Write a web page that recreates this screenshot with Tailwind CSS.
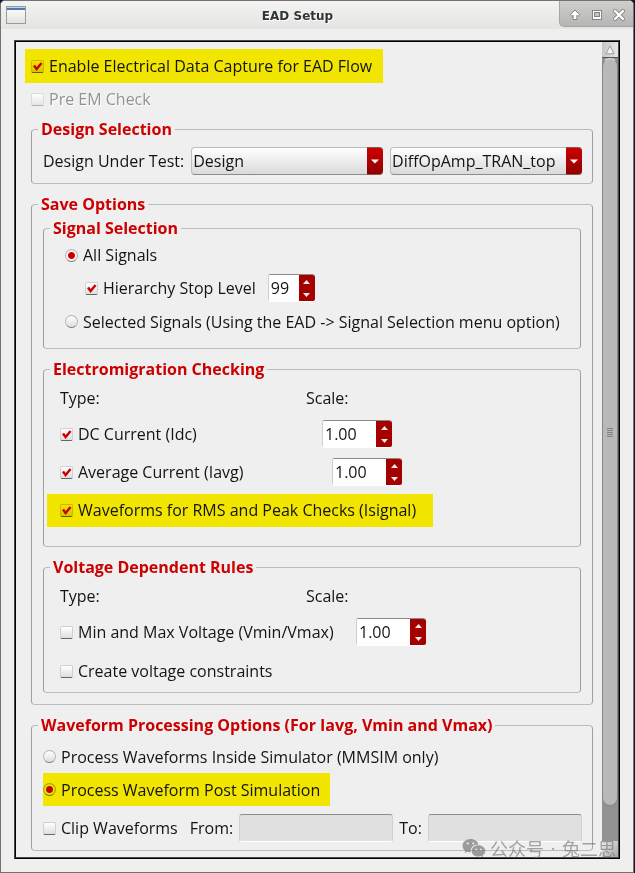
<!DOCTYPE html>
<html lang="en">
<head>
    <meta charset="UTF-8">
    <meta name="viewport" content="width=device-width, initial-scale=1.0">
    <title>EAD Setup</title>
    <script src="https://cdn.jsdelivr.net/npm/@tailwindcss/browser@4"></script>
</head>
<body class="min-h-screen bg-[#0d1a2e] pr-px flex font-['Open_Sans',sans-serif] text-base leading-[22px] text-[#141414]">
    <div class="relative flex-1 min-w-0 flex flex-col bg-[#efefef] border border-[#767271] rounded-t-[5px] overflow-hidden">

        <!-- Title bar -->
        <header class="flex items-start h-7 bg-linear-to-b from-[#f3f3f2] to-[#e4e4e2]">
            <svg class="ml-[5px] mt-[5px] shrink-0" width="20" height="18" viewBox="0 0 20 18" aria-hidden="true">
                <defs>
                    <linearGradient id="win" x1="0" y1="0" x2="0" y2="1">
                        <stop offset="0" stop-color="#ffffff"/>
                        <stop offset="1" stop-color="#e2e2df"/>
                    </linearGradient>
                </defs>
                <rect x="0.5" y="0.5" width="19" height="17" fill="url(#win)" stroke="#9b9b97"/>
                <rect x="1" y="1" width="18" height="1" fill="#c9d3e2"/>
                <rect x="1" y="2" width="18" height="2" fill="#4a78b8"/>
            </svg>
            <h1 class="flex-1 pl-2.5 text-center font-['DejaVu_Sans',sans-serif] font-bold text-[12px] leading-[30px] text-[#2e3436] [text-shadow:1px_1px_0_#fff]">EAD Setup</h1>
            <div class="flex items-center justify-center gap-2 w-[74px] h-[26px] pt-0.5 border-l border-b border-[#a5a5a3] rounded-bl-[5px] bg-linear-to-b from-[#cfcfcd] to-[#b5b5b3]">
                <button type="button" aria-label="Shade" class="size-[14px]">
                    <svg width="14" height="14" viewBox="0 0 14 14"><path d="M7 2 L11.700 6.700 L10.200 8.300 L8.900 7.300 V11.500 H5.100 V7.300 L3.800 8.300 L2.300 6.700 Z" fill="#fff" stroke="#858585"/></svg>
                </button>
                <button type="button" aria-label="Maximize" class="size-[14px]">
                    <svg width="14" height="14" viewBox="0 0 14 14"><rect x="2.5" y="2.5" width="9" height="9" fill="#fff" stroke="#858585"/><rect x="4.500" y="4.500" width="5" height="4" fill="#c4c4c2" stroke="#858585"/></svg>
                </button>
                <button type="button" aria-label="Close" class="size-[14px]">
                    <svg width="14" height="14" viewBox="0 0 14 14"><path d="M3 3 L11 11 M11 3 L3 11" stroke="#858585" stroke-width="4" stroke-linecap="round"/><path d="M3 3 L11 11 M11 3 L3 11" stroke="#fff" stroke-width="2.400" stroke-linecap="round"/></svg>
                </button>
            </div>
        </header>

        <!-- Scroll frame -->
        <main class="flex-1 flex mt-[11px] mx-[13px] mb-[13px] border border-[#4a4a4a] border-r-black border-b-black">
            <form class="flex-1 min-w-0 border border-black border-b-[#4a4a4a] border-r-0 pt-[7px] pl-[15px] pr-[9px] pb-1.5">

                <label class="flex items-center gap-[5px] w-fit h-[34px] -ml-1.5 pl-1.5 pr-[11px] bg-[#f2e500]">
                    <span class="relative size-[13px] shrink-0">
                        <input type="checkbox" checked class="peer appearance-none block size-[13px] rounded-[2px] border border-[#d0d0d0] border-b-[#666] bg-linear-to-b from-white to-[#dedede] mix-blend-multiply">
                        <svg class="hidden peer-checked:block absolute inset-0 pointer-events-none" viewBox="0 0 13 13"><path d="M3 5.500 L5.600 9 L10.600 3" fill="none" stroke="#cc0000" stroke-width="2.400"/></svg>
                    </span>
                    Enable Electrical Data Capture for EAD Flow
                </label>
                <label class="flex items-center gap-[5px] w-fit h-8 text-[#929292] [text-shadow:1px_1px_0_#fff]">
                    <input type="checkbox" disabled class="appearance-none block size-[13px] rounded-[2px] border border-[#dadada] border-b-[#b0b0b0] bg-linear-to-b from-white to-[#e6e6e6]">
                    Pre EM Check
                </label>

                <fieldset class="min-w-0 mt-[3px] border border-[#bcbcbc] border-l-[#a0a0a0] border-r-[#a0a0a0] rounded-[4px]">
                    <legend class="ml-1.5 px-[3px] font-bold text-[#cc0000]">Design Selection</legend>
                    <div class="flex items-center gap-[7px] pt-[7px] pl-[11px] pr-2.5 pb-2">
                        <label for="dut-kind" class="shrink-0">Design Under Test:</label>
                        <div class="relative flex-1 min-w-0">
                            <select id="dut-kind" class="appearance-none block w-full h-7 pl-px pr-4 rounded-[4px] border border-[#bdbdbd] border-b-[#8c8c8c] bg-linear-to-b from-white to-[#dadada]">
                                <option>Design</option>
                            </select>
                            <span class="absolute right-0 top-0 bottom-0 w-4 flex items-center justify-center rounded-r-[4px] border-y border-[#8f5555] bg-linear-to-b from-[#cc0000] to-[#900000] pointer-events-none">
                                <svg width="8" height="5" viewBox="0 0 8 5"><path d="M0 0.500 H8 L4 4.500 Z" fill="#fff"/></svg>
                            </span>
                        </div>
                        <div class="relative flex-1 min-w-0">
                            <select aria-label="Design name" class="appearance-none block w-full h-7 pl-px pr-4 rounded-[4px] border border-[#bdbdbd] border-b-[#8c8c8c] bg-linear-to-b from-white to-[#dadada]">
                                <option>DiffOpAmp_TRAN_top</option>
                            </select>
                            <span class="absolute right-0 top-0 bottom-0 w-4 flex items-center justify-center rounded-r-[4px] border-y border-[#8f5555] bg-linear-to-b from-[#cc0000] to-[#900000] pointer-events-none">
                                <svg width="8" height="5" viewBox="0 0 8 5"><path d="M0 0.500 H8 L4 4.500 Z" fill="#fff"/></svg>
                            </span>
                        </div>
                    </div>
                </fieldset>

                <fieldset class="min-w-0 mt-[9px] border border-[#bcbcbc] border-l-[#a0a0a0] border-r-[#a0a0a0] rounded-[4px]">
                    <legend class="ml-1.5 px-[3px] font-bold text-[#cc0000]">Save Options</legend>
                    <div class="pt-0.5 px-[11px] pb-[11px]">

                        <fieldset class="min-w-0 border border-[#bcbcbc] border-l-[#a0a0a0] border-r-[#a0a0a0] rounded-[4px]">
                            <legend class="ml-1.5 px-[3px] font-bold text-[#cc0000]">Signal Selection</legend>
                            <div class="pl-[21px] pb-2.5">
                                <label class="flex items-center gap-[5px] w-fit h-8">
                                    <input type="radio" name="signals" checked class="appearance-none block size-[13px] rounded-full border border-[#b5b5b5] border-b-[#777] bg-[radial-gradient(circle,#cc0000_3px,#ffffff_4px,#e4e4e4_6px)]">
                                    All Signals
                                </label>
                                <div class="flex items-center gap-3 h-[34px] ml-5">
                                    <label for="stop-level-on" class="flex items-center gap-[5px]">
                                        <span class="relative size-[13px] shrink-0">
                                            <input id="stop-level-on" type="checkbox" checked class="peer appearance-none block size-[13px] rounded-[2px] border border-[#d0d0d0] border-b-[#666] bg-linear-to-b from-white to-[#dedede]">
                                            <svg class="hidden peer-checked:block absolute inset-0 pointer-events-none" viewBox="0 0 13 13"><path d="M3 5.500 L5.600 9 L10.600 3" fill="none" stroke="#cc0000" stroke-width="2.400"/></svg>
                                        </span>
                                        Hierarchy Stop Level
                                    </label>
                                    <div class="flex h-7 rounded-[3px] overflow-hidden border-t border-t-[#8a8a8a] border-b border-b-white">
                                        <input type="text" inputmode="numeric" value="99" aria-label="Hierarchy stop level value" class="w-[31px] pl-0.5 bg-white border-l border-[#cfcfcf] outline-none">
                                        <div class="flex flex-col w-4 bg-[#a40000]">
                                            <button type="button" aria-label="Increase" class="flex-1 flex items-center justify-center"><svg width="7" height="4" viewBox="0 0 7 4"><path d="M0 4 H7 L3.500 0 Z" fill="#f5e5e5"/></svg></button>
                                            <button type="button" aria-label="Decrease" class="flex-1 flex items-center justify-center"><svg width="7" height="4" viewBox="0 0 7 4"><path d="M0 0 H7 L3.500 4 Z" fill="#f5e5e5"/></svg></button>
                                        </div>
                                    </div>
                                </div>
                                <label class="flex items-center gap-[5px] w-fit h-[33px]">
                                    <input type="radio" name="signals" class="appearance-none block size-[13px] rounded-full border border-[#b5b5b5] border-b-[#777] bg-linear-to-b from-white to-[#dedede]">
                                    Selected Signals (Using the EAD -&gt; Signal Selection menu option)
                                </label>
                            </div>
                        </fieldset>

                        <fieldset class="min-w-0 mt-[9px] border border-[#bcbcbc] border-l-[#a0a0a0] border-r-[#a0a0a0] rounded-[4px]">
                            <legend class="ml-1.5 px-[3px] font-bold text-[#cc0000]">Electromigration Checking</legend>
                            <div class="pl-4 pb-[17px]">
                                <div class="flex items-center h-[35px]">
                                    <span class="w-[246px]">Type:</span>
                                    <span>Scale:</span>
                                </div>
                                <div class="flex items-center h-[38px]">
                                    <label class="flex items-center gap-[5px] w-[262px]">
                                        <span class="relative size-[13px] shrink-0">
                                            <input type="checkbox" checked class="peer appearance-none block size-[13px] rounded-[2px] border border-[#d0d0d0] border-b-[#666] bg-linear-to-b from-white to-[#dedede]">
                                            <svg class="hidden peer-checked:block absolute inset-0 pointer-events-none" viewBox="0 0 13 13"><path d="M3 5.500 L5.600 9 L10.600 3" fill="none" stroke="#cc0000" stroke-width="2.400"/></svg>
                                        </span>
                                        DC Current (Idc)
                                    </label>
                                    <div class="flex h-7 rounded-[3px] overflow-hidden border-t border-t-[#8a8a8a] border-b border-b-white">
                                        <input type="text" inputmode="decimal" value="1.00" aria-label="DC Current scale" class="w-[54px] pl-0.5 bg-white border-l border-[#cfcfcf] outline-none">
                                        <div class="flex flex-col w-4 bg-[#a40000]">
                                            <button type="button" aria-label="Increase" class="flex-1 flex items-center justify-center"><svg width="7" height="4" viewBox="0 0 7 4"><path d="M0 4 H7 L3.500 0 Z" fill="#f5e5e5"/></svg></button>
                                            <button type="button" aria-label="Decrease" class="flex-1 flex items-center justify-center"><svg width="7" height="4" viewBox="0 0 7 4"><path d="M0 0 H7 L3.500 4 Z" fill="#f5e5e5"/></svg></button>
                                        </div>
                                    </div>
                                </div>
                                <div class="flex items-center h-[38px]">
                                    <label class="flex items-center gap-[5px] w-[272px]">
                                        <span class="relative size-[13px] shrink-0">
                                            <input type="checkbox" checked class="peer appearance-none block size-[13px] rounded-[2px] border border-[#d0d0d0] border-b-[#666] bg-linear-to-b from-white to-[#dedede]">
                                            <svg class="hidden peer-checked:block absolute inset-0 pointer-events-none" viewBox="0 0 13 13"><path d="M3 5.500 L5.600 9 L10.600 3" fill="none" stroke="#cc0000" stroke-width="2.400"/></svg>
                                        </span>
                                        Average Current (Iavg)
                                    </label>
                                    <div class="flex h-7 rounded-[3px] overflow-hidden border-t border-t-[#8a8a8a] border-b border-b-white">
                                        <input type="text" inputmode="decimal" value="1.00" aria-label="Average Current scale" class="w-[54px] pl-0.5 bg-white border-l border-[#cfcfcf] outline-none">
                                        <div class="flex flex-col w-4 bg-[#a40000]">
                                            <button type="button" aria-label="Increase" class="flex-1 flex items-center justify-center"><svg width="7" height="4" viewBox="0 0 7 4"><path d="M0 4 H7 L3.500 0 Z" fill="#f5e5e5"/></svg></button>
                                            <button type="button" aria-label="Decrease" class="flex-1 flex items-center justify-center"><svg width="7" height="4" viewBox="0 0 7 4"><path d="M0 0 H7 L3.500 4 Z" fill="#f5e5e5"/></svg></button>
                                        </div>
                                    </div>
                                </div>
                                <div class="flex items-center h-[38px]">
                                    <label class="flex items-center gap-[5px] h-[33px] -ml-[13px] pl-[13px] pr-[17px] bg-[#f2e500]">
                                        <span class="relative size-[13px] shrink-0">
                                            <input type="checkbox" checked class="peer appearance-none block size-[13px] rounded-[2px] border border-[#d0d0d0] border-b-[#666] bg-linear-to-b from-white to-[#dedede] mix-blend-multiply">
                                            <svg class="hidden peer-checked:block absolute inset-0 pointer-events-none" viewBox="0 0 13 13"><path d="M3 5.500 L5.600 9 L10.600 3" fill="none" stroke="#cc0000" stroke-width="2.400"/></svg>
                                        </span>
                                        Waveforms for RMS and Peak Checks (Isignal)
                                    </label>
                                </div>
                            </div>
                        </fieldset>

                        <fieldset class="min-w-0 mt-[9px] border border-[#bcbcbc] border-l-[#a0a0a0] border-r-[#a0a0a0] rounded-[4px]">
                            <legend class="ml-1.5 px-[3px] font-bold text-[#cc0000]">Voltage Dependent Rules</legend>
                            <div class="pl-4 pb-px">
                                <div class="flex items-center h-[35px]">
                                    <span class="w-[246px]">Type:</span>
                                    <span>Scale:</span>
                                </div>
                                <div class="flex items-center h-[38px]">
                                    <label class="flex items-center gap-[5px] w-[296px]">
                                        <input type="checkbox" class="appearance-none block size-[13px] rounded-[2px] border border-[#d0d0d0] border-b-[#666] bg-linear-to-b from-white to-[#dedede]">
                                        Min and Max Voltage (Vmin/Vmax)
                                    </label>
                                    <div class="flex h-7 rounded-[3px] overflow-hidden border-t border-t-[#8a8a8a] border-b border-b-white">
                                        <input type="text" inputmode="decimal" value="1.00" aria-label="Voltage scale" class="w-[54px] pl-0.5 bg-white border-l border-[#cfcfcf] outline-none">
                                        <div class="flex flex-col w-4 bg-[#a40000]">
                                            <button type="button" aria-label="Increase" class="flex-1 flex items-center justify-center"><svg width="7" height="4" viewBox="0 0 7 4"><path d="M0 4 H7 L3.500 0 Z" fill="#f5e5e5"/></svg></button>
                                            <button type="button" aria-label="Decrease" class="flex-1 flex items-center justify-center"><svg width="7" height="4" viewBox="0 0 7 4"><path d="M0 0 H7 L3.500 4 Z" fill="#f5e5e5"/></svg></button>
                                        </div>
                                    </div>
                                </div>
                                <label class="flex items-center gap-[5px] w-fit h-10">
                                    <input type="checkbox" class="appearance-none block size-[13px] rounded-[2px] border border-[#d0d0d0] border-b-[#666] bg-linear-to-b from-white to-[#dedede]">
                                    Create voltage constraints
                                </label>
                            </div>
                        </fieldset>
                    </div>
                </fieldset>

                <fieldset class="min-w-0 mt-[9px] border border-[#bcbcbc] border-l-[#a0a0a0] border-r-[#a0a0a0] rounded-[4px]">
                    <legend class="ml-1.5 px-[3px] font-bold text-[#cc0000]">Waveform Processing Options (For Iavg, Vmin and Vmax)</legend>
                    <div class="pt-1 pl-[11px] pr-2.5 pb-2">
                        <label class="flex items-center gap-[5px] w-fit h-[33px]">
                            <input type="radio" name="processing" class="appearance-none block size-[13px] rounded-full border border-[#b5b5b5] border-b-[#777] bg-linear-to-b from-white to-[#dedede]">
                            Process Waveforms Inside Simulator (MMSIM only)
                        </label>
                        <label class="flex items-center gap-[5px] w-fit h-[33px] pr-2.5 bg-[#f2e500]">
                            <input type="radio" name="processing" checked class="appearance-none block size-[13px] rounded-full border border-[#b5b5b5] border-b-[#777] bg-[radial-gradient(circle,#cc0000_3px,#ffffff_4px,#e4e4e4_6px)] mix-blend-multiply">
                            Process Waveform Post Simulation
                        </label>
                        <div class="flex items-center gap-1.5 mt-2">
                            <label class="flex items-center gap-[5px] shrink-0 pr-1.5">
                                <input type="checkbox" class="appearance-none block size-[13px] rounded-[2px] border border-[#d0d0d0] border-b-[#666] bg-linear-to-b from-white to-[#dedede]">
                                Clip Waveforms
                            </label>
                            <label for="clip-from" class="shrink-0">From:</label>
                            <input id="clip-from" type="text" disabled class="flex-1 min-w-0 h-7 px-1 rounded-[3px] bg-[#e0e0e0] border border-[#cfcfcf] border-t-[#8c8c8c] border-b-white">
                            <label for="clip-to" class="shrink-0">To:</label>
                            <input id="clip-to" type="text" disabled class="flex-1 min-w-0 h-7 px-1 rounded-[3px] bg-[#e0e0e0] border border-[#cfcfcf] border-t-[#8c8c8c] border-b-white">
                        </div>
                    </div>
                </fieldset>
            </form>

            <!-- Vertical scrollbar -->
            <div class="flex flex-col w-[17px] border-y border-r border-t-black border-r-[#4a4a4a] border-b-[#4a4a4a] bg-[#929292]">
                <button type="button" aria-label="Scroll up" class="flex items-center justify-center h-4 bg-linear-to-r from-[#c6c6c6] to-[#e6e6e6] border-b border-[#555]">
                    <svg width="10" height="10" viewBox="0 0 10 10"><path d="M5 0.800 L9 8.800 H1 Z" fill="#f4f4f4" stroke="#999"/></svg>
                </button>
                <div class="flex-1 flex flex-col items-center justify-center gap-px mb-[35px] rounded-[8px] border border-[#858585] border-t-[#dcdcdc] bg-[#b9b9b9]">
                    <span class="w-1.5 h-px bg-[#808080]"></span>
                    <span class="w-1.5 h-px bg-[#808080]"></span>
                    <span class="w-1.5 h-px bg-[#808080]"></span>
                    <span class="w-1.5 h-px bg-[#808080]"></span>
                    <span class="w-1.5 h-px bg-[#808080]"></span>
                </div>
                <button type="button" aria-label="Scroll down" class="flex items-center justify-center h-4 bg-linear-to-br from-[#ececec] to-[#a8a8a8]"></button>
            </div>
        </main>

        <!-- Watermark -->
        <div class="absolute right-[17px] bottom-3 flex items-center gap-1 font-['Noto_Sans_CJK_SC',sans-serif] text-lg leading-6 text-[#777]/65 pointer-events-none">
            <svg width="24" height="20" viewBox="0 0 24 20" aria-hidden="true">
                <path d="M8.500 1 C4 1 0.500 4 0.500 7.700 C0.500 9.800 1.600 11.600 3.400 12.900 L2.700 15.200 L5.400 13.800 C6.600 14.200 7.600 14.300 8.800 14.300 C8 10 11.500 6.400 16.400 6.500 C15.600 3.300 12.400 1 8.500 1 Z" fill="#777" fill-opacity="0.700"/>
                <path d="M16.500 7.300 C12.600 7.300 9.700 9.800 9.700 12.900 C9.700 16 12.600 18.500 16.500 18.500 C17.300 18.500 18.200 18.300 19 18.100 L21.200 19.300 L20.600 17.300 C22.300 16.200 23.300 14.700 23.300 12.900 C23.300 9.800 20.300 7.300 16.500 7.300 Z" fill="#777" fill-opacity="0.700"/>
                <g fill="#efefef"><circle cx="5.800" cy="5.500" r="1.100"/><circle cx="11.200" cy="5.500" r="1.100"/><circle cx="14.300" cy="11.300" r="0.900"/><circle cx="18.700" cy="11.300" r="0.900"/></g>
            </svg>
            <span>公众号</span>
            <span class="w-2.5 text-center font-['Open_Sans',sans-serif]">·</span>
            <span>兔二思</span>
        </div>
    </div>
</body>
</html>
